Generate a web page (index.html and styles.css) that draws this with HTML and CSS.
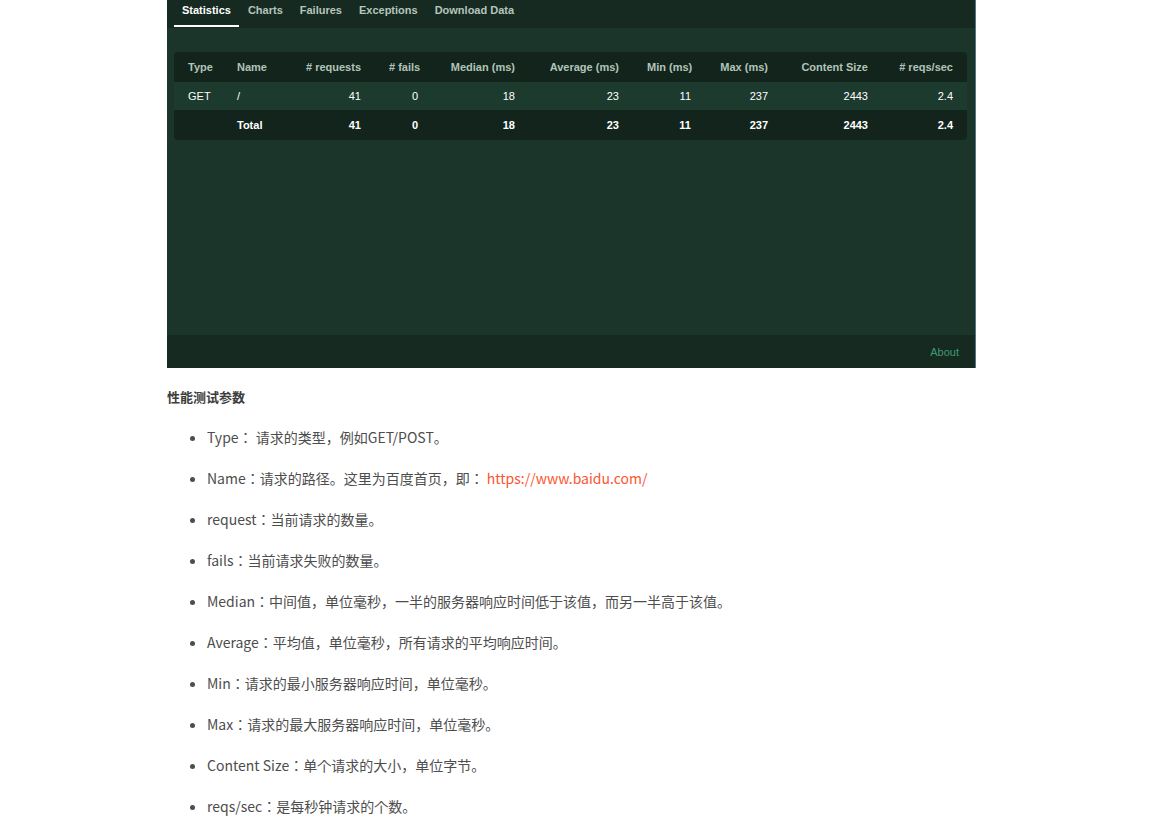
FILE: index.html
```html
<!DOCTYPE html>
<html lang="zh-CN">
<head>
<meta charset="utf-8">
<title>Locust 性能测试参数</title>
<link rel="stylesheet" href="styles.css">
</head>
<body>
<div class="page">
  <div class="shot">
    <nav class="tabs">
      <a class="tab active">Statistics</a>
      <a class="tab">Charts</a>
      <a class="tab">Failures</a>
      <a class="tab">Exceptions</a>
      <a class="tab">Download Data</a>
    </nav>
    <main class="main">
      <table class="stats">
        <colgroup>
          <col class="c-type"><col class="c-name"><col class="c-req"><col class="c-fail"><col class="c-med"><col class="c-avg"><col class="c-min"><col class="c-max"><col class="c-size"><col class="c-rps">
        </colgroup>
        <thead>
          <tr>
            <th class="l">Type</th><th class="l">Name</th><th># requests</th><th># fails</th><th>Median (ms)</th><th>Average (ms)</th><th>Min (ms)</th><th>Max (ms)</th><th>Content Size</th><th># reqs/sec</th>
          </tr>
        </thead>
        <tbody>
          <tr class="row">
            <td class="l">GET</td><td class="l">/</td><td>41</td><td>0</td><td>18</td><td>23</td><td>11</td><td>237</td><td>2443</td><td>2.4</td>
          </tr>
          <tr class="total">
            <td class="l"></td><td class="l">Total</td><td>41</td><td>0</td><td>18</td><td>23</td><td>11</td><td>237</td><td>2443</td><td>2.4</td>
          </tr>
        </tbody>
      </table>
    </main>
    <footer class="foot"><a class="about">About</a></footer>
  </div>

  <article class="article">
    <p class="title">性能测试参数</p>
    <ul class="params">
      <li>Type： 请求的类型，例如GET/POST。</li>
      <li>Name：请求的路径。这里为百度首页，即： <a class="link">https://www.baidu.com/</a></li>
      <li>request：当前请求的数量。</li>
      <li>fails：当前请求失败的数量。</li>
      <li>Median：中间值，单位毫秒，一半的服务器响应时间低于该值，而另一半高于该值。</li>
      <li>Average：平均值，单位毫秒，所有请求的平均响应时间。</li>
      <li>Min：请求的最小服务器响应时间，单位毫秒。</li>
      <li>Max：请求的最大服务器响应时间，单位毫秒。</li>
      <li>Content Size：单个请求的大小，单位字节。</li>
      <li>reqs/sec：是每秒钟请求的个数。</li>
    </ul>
  </article>
</div>
</body>
</html>
```
FILE: styles.css
```css
html, body {
  margin: 0;
  padding: 0;
  background: #ffffff;
}

.page {
  padding-left: 167px;
}

.shot {
  width: 808px;
  border-right: 1px solid #4f7690;
  font-family: "Liberation Sans", Arial, sans-serif;
  display: flex;
  flex-direction: column;
}

.tabs {
  height: 28px;
  background: #172a21;
  display: flex;
  gap: 1px;
  padding-left: 7px;
  box-sizing: border-box;
}

.tab {
  padding: 3px 8px 8px;
  line-height: 14px;
  font-size: 11px;
  font-weight: bold;
  color: #b5c6bc;
  border-bottom: 2px solid transparent;
  height: 14px;
}

.tab.active {
  color: #ffffff;
  border-bottom-color: #ffffff;
}

.main {
  background: #1b352a;
  height: 307px;
  box-sizing: border-box;
  padding: 24px 8px 0 7px;
}

.stats {
  width: 793px;
  table-layout: fixed;
  border-collapse: separate;
  border-spacing: 0;
  background: #13241c;
  border-radius: 4px;
  font-size: 11px;
}

.c-type { width: 49px; }
.c-name { width: 68px; }
.c-req { width: 84px; }
.c-fail { width: 57px; }
.c-med { width: 97px; }
.c-avg { width: 104px; }
.c-min { width: 72px; }
.c-max { width: 77px; }
.c-size { width: 100px; }
.c-rps { width: 85px; }

.stats th,
.stats td {
  padding: 0 14px;
  text-align: right;
  white-space: nowrap;
}

.stats th {
  height: 30px;
  color: #b1c4b9;
  font-weight: bold;
}

.stats .l {
  text-align: left;
}

.stats .row td {
  height: 28px;
  background: #1c3a2e;
  color: #ffffff;
}

.stats .total td {
  height: 30px;
  color: #ffffff;
  font-weight: bold;
}

.foot {
  height: 33px;
  background: #162a21;
  display: flex;
  align-items: center;
  justify-content: flex-end;
  padding-right: 16px;
}

.about {
  font-size: 11px;
  color: #3d9b71;
}

.article {
  font-family: "Noto Sans CJK JP", "Noto Sans CJK SC", "Noto Sans", sans-serif;
  font-feature-settings: "locl" 0;
  color: #4d4d4d;
}

.title {
  margin: 20px 0 0;
  font-size: 13px;
  line-height: 18px;
  font-weight: bold;
  color: #3d3d3d;
}

.params {
  margin: 20px 0 0;
  padding-left: 40px;
  font-size: 14px;
}

.params li {
  line-height: 22px;
  margin-bottom: 19px;
}

.link {
  color: #fc5531;
}
```
